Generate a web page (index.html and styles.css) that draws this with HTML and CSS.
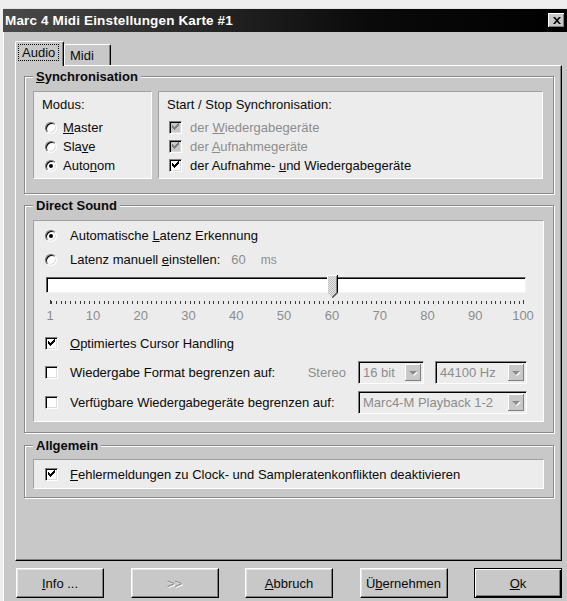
FILE: index.html
```html
<!DOCTYPE html>
<html lang="de">
<head>
<meta charset="utf-8">
<title>Marc 4 Midi Einstellungen Karte #1</title>
<link rel="stylesheet" href="styles.css">
</head>
<body>
<div class="window">
  <div class="titlebar">
    <span class="title">Marc 4 Midi Einstellungen Karte #1</span>
    <span class="close">
      <svg width="8" height="7" viewBox="0 0 8 7"><path d="M0 0h2l2 2.2L6 0h2L5 3.5 8 7H6L4 4.8 2 7H0l3-3.5z" fill="#000"/></svg>
    </span>
  </div>
  <div class="client">
    <div class="tabs">
      <div class="tab active"><span class="focus">Audio</span></div>
      <div class="tab">Midi</div>
    </div>
    <div class="panel">
      <div class="group sync">
        <div class="group-title"><u>S</u>ynchronisation</div>
        <div class="sync-body">
          <div class="box modus">
            <div class="caption">Modus:</div>
            <div class="opt"><span class="radio"></span><span><u>M</u>aster</span></div>
            <div class="opt"><span class="radio"></span><span>Sla<u>v</u>e</span></div>
            <div class="opt"><span class="radio on"></span><span>Auto<u>n</u>om</span></div>
          </div>
          <div class="box startstop">
            <div class="caption">Start / Stop Synchronisation:</div>
            <div class="opt dis"><span class="check on dis"></span><span>der <u>W</u>iedergabegeräte</span></div>
            <div class="opt dis"><span class="check on dis"></span><span>der <u>A</u>ufnahmegeräte</span></div>
            <div class="opt"><span class="check on"></span><span>der Aufnahme- <u>u</u>nd Wiedergabegeräte</span></div>
          </div>
        </div>
      </div>

      <div class="group ds">
        <div class="group-title">Direct Sound</div>
        <div class="box ds-body">
          <div class="opt row1"><span class="radio on"></span><span>Automatische <u>L</u>atenz Erkennung</span></div>
          <div class="opt row2"><span class="radio"></span><span>Latenz manuell <u>e</u>instellen:</span><span class="val">60</span><span class="unit">ms</span></div>
          <div class="track">
            <span class="thumb" style="left: calc(59.6% - 5px)">
              <svg width="11" height="23" viewBox="0 0 11 23">
                <defs>
                  <pattern id="dither" width="2" height="2" patternUnits="userSpaceOnUse">
                    <rect width="2" height="2" fill="#e6e6e6"/>
                    <rect width="1" height="1" fill="#bdbdbd"/>
                    <rect x="1" y="1" width="1" height="1" fill="#bdbdbd"/>
                  </pattern>
                </defs>
                <path d="M0.5 0.5h9.5v17l-5 5-4.5-4.5z" fill="url(#dither)"/>
                <path d="M0.5 18V0.5h9" fill="none" stroke="#fff"/>
                <path d="M9.5 1v16.5l-4.5 4.5" fill="none" stroke="#808080"/>
                <path d="M10.5 0v17.8l-5 5" fill="none" stroke="#000"/>
              </svg>
            </span>
          </div>
          <div class="ticks"></div>
          <div class="scale">
            <span style="left: 0%">1</span>
            <span style="left: 9.09%">10</span>
            <span style="left: 19.19%">20</span>
            <span style="left: 29.29%">30</span>
            <span style="left: 39.39%">40</span>
            <span style="left: 49.49%">50</span>
            <span style="left: 59.6%">60</span>
            <span style="left: 69.7%">70</span>
            <span style="left: 79.8%">80</span>
            <span style="left: 89.9%">90</span>
            <span style="left: 100%">100</span>
          </div>
          <div class="opt row3"><span class="check on"></span><span><u>O</u>ptimiertes Cursor Handling</span></div>
          <div class="opt row4">
            <span class="check"></span><span class="grow">Wiedergabe Format begrenzen auf:</span>
            <span class="stereo">Stereo</span>
            <span class="combo c16"><span class="ctext">16 bit</span><span class="drop"><i></i></span></span>
            <span class="combo c441"><span class="ctext">44100 Hz</span><span class="drop"><i></i></span></span>
          </div>
          <div class="opt row5">
            <span class="check"></span><span class="grow">Verfügbare Wiedergabegeräte begrenzen auf:</span>
            <span class="combo cdev"><span class="ctext">Marc4-M Playback 1-2</span><span class="drop"><i></i></span></span>
          </div>
        </div>
      </div>

      <div class="group gen">
        <div class="group-title">Allgemein</div>
        <div class="box gen-body">
          <div class="opt"><span class="check on"></span><span><u>F</u>ehlermeldungen zu Clock- und Sampleratenkonflikten deaktivieren</span></div>
        </div>
      </div>
    </div>

    <div class="buttons">
      <button class="btn"><u>I</u>nfo ...</button>
      <button class="btn disabled">&gt;&gt;</button>
      <button class="btn"><u>A</u>bbruch</button>
      <button class="btn">Ü<u>b</u>ernehmen</button>
      <button class="btn default"><u>O</u>k</button>
    </div>
  </div>
</div>
</body>
</html>
```
FILE: styles.css
```css
* {
  box-sizing: border-box;
}

html,
body {
  margin: 0;
  padding: 0;
}

body {
  width: 567px;
  height: 601px;
  overflow: hidden;
  background: #eeeeee;
  font-family: "Liberation Sans", Arial, sans-serif;
  font-size: 13px;
  color: #0a0a0a;
}

u {
  text-decoration: underline;
  text-underline-offset: 1px;
}

/* window frame */
.window {
  margin: 8px 0 0 3px;
  height: 593px;
  background: #c8c8c8;
  border-top: 1px solid #e2e2e2;
  box-shadow: inset 1px 0 #ffffff;
}

.titlebar {
  height: 23px;
  display: flex;
  align-items: center;
  justify-content: space-between;
  padding: 0 2px 0 2px;
  background: linear-gradient(90deg, #4a4a4a 0%, #262626 35%, #0a0a0a 65%, #000 100%);
}

.title {
  color: #ffffff;
  font-weight: bold;
  font-size: 13.5px;
  letter-spacing: 0.15px;
}

.close {
  width: 17px;
  height: 15px;
  display: flex;
  align-items: center;
  justify-content: center;
  background: #c8c8c8;
  box-shadow: inset -1px -1px #000, inset 1px 1px #fff, inset -2px -2px #808080;
}

/* client area */
.client {
  padding: 9px 5px 0 12px;
}

.tabs {
  height: 24px;
  display: flex;
  align-items: flex-end;
}

.tab {
  height: 21px;
  padding: 3px 0 0 5px;
  width: 47px;
  background: #c8c8c8;
  border-top: 1px solid #fff;
  border-left: 1px solid #fff;
  border-right: 1px solid #000;
  border-radius: 2px 2px 0 0;
  box-shadow: inset -1px 0 #808080;
}

.tab.active {
  position: relative;
  z-index: 1;
  width: 49px;
  height: 25px;
  margin-bottom: -1px;
  padding: 3px 0 0 3px;
}

.focus {
  display: inline-block;
  padding: 0 3px;
  line-height: 15px;
  outline: 1px dotted #000;
}

.panel {
  width: 547px;
  height: 496px;
  background: #c8c8c8;
  border-top: 1px solid #fff;
  border-left: 1px solid #fff;
  border-right: 1px solid #000;
  border-bottom: 1px solid #000;
  box-shadow: inset -1px -1px #808080;
  padding: 10px 7px 0 8px;
}

/* etched group boxes */
.group {
  display: flex;
  flex-direction: column;
  align-items: flex-start;
  border: 1px solid #8a8a8a;
  box-shadow: inset 1px 1px #fff, 1px 1px #fff;
  padding: 0 9px 0 8px;
}

.group-title {
  margin: -8px 0 0 0;
  padding: 0 3px;
  line-height: 15px;
  font-weight: bold;
  background: #c8c8c8;
}

.box {
  background: #ececec;
  border: 1px solid;
  border-color: #a0a0a0 #ffffff #ffffff #a0a0a0;
}

/* Synchronisation */
.sync {
  padding-bottom: 14px;
}

.sync-body {
  margin-top: 7px;
  display: flex;
  gap: 6px;
}

.modus {
  width: 119px;
  height: 88px;
  padding: 5px 0 0 8px;
}

.startstop {
  width: 385px;
  height: 88px;
  padding: 5px 0 0 8px;
}

.caption {
  line-height: 15px;
  margin-bottom: 6px;
}

.opt {
  display: flex;
  align-items: center;
  height: 19px;
  white-space: nowrap;
}

.opt.dis {
  color: #8c8c8c;
}

.modus .opt {
  padding-left: 3px;
}

.modus .radio {
  margin-right: 6px;
}

.startstop .opt {
  padding-left: 2px;
}

.startstop .check {
  margin-right: 8px;
}

/* radio buttons */
.radio {
  position: relative;
  flex: none;
  width: 12px;
  height: 12px;
  border-radius: 50%;
  border: 1px solid;
  border-color: #707070 #ffffff #ffffff #707070;
  background: #fff;
  box-shadow: inset 1px 1px #000, inset -1px -1px #dcdcdc;
}

.radio.on::after {
  content: "";
  position: absolute;
  left: 3px;
  top: 3px;
  width: 4px;
  height: 4px;
  border-radius: 50%;
  background: #000;
}

/* check boxes */
.check {
  position: relative;
  flex: none;
  width: 13px;
  height: 13px;
  border: 1px solid;
  border-color: #808080 #ffffff #ffffff #808080;
  background: #fff;
  box-shadow: inset 1px 1px #000, inset -1px -1px #dcdcdc;
}

.check.dis {
  background: #c8c8c8;
}

.check.on::after {
  content: "";
  position: absolute;
  left: 2px;
  top: 1px;
  width: 7px;
  height: 7px;
  background: no-repeat center / 7px 7px url("data:image/svg+xml;utf8,<svg xmlns='http://www.w3.org/2000/svg' width='7' height='7' viewBox='0 0 7 7'><path d='M0 2h1v1h1v1h1V3h1V2h1V1h1V0h1v3H6v1H5v1H4v1H3v1H2V6H1V5H0z' fill='%23000'/></svg>");
}

.check.on.dis::after {
  background-image: url("data:image/svg+xml;utf8,<svg xmlns='http://www.w3.org/2000/svg' width='7' height='7' viewBox='0 0 7 7'><path d='M0 2h1v1h1v1h1V3h1V2h1V1h1V0h1v3H6v1H5v1H4v1H3v1H2V6H1V5H0z' fill='%23808080'/></svg>");
}

/* Direct Sound */
.ds {
  margin-top: 11px;
  padding-bottom: 10px;
}

.ds-body {
  margin-top: 7px;
  width: 511px;
  height: 202px;
  padding: 5px 16px 0 11px;
}

.ds-body .radio {
  margin-right: 13px;
}

.ds-body .check {
  margin-right: 12px;
}

.row2 {
  margin-top: 5px;
}

.val {
  margin-left: 11px;
  color: #8c8c8c;
}

.unit {
  margin-left: 15px;
  color: #8c8c8c;
  font-size: 12px;
}

.track {
  position: relative;
  margin: 8px 0 0 1px;
  width: 480px;
  height: 16px;
  background: #fff;
  border: 1px solid;
  border-color: #606060 #f4f4f4 #f4f4f4 #606060;
  box-shadow: inset 1px 1px #000;
}

.thumb {
  position: absolute;
  top: -3px;
  width: 11px;
  height: 23px;
}

.thumb svg {
  display: block;
}

.ticks {
  margin: 7px 0 0 5px;
  width: 474px;
  height: 4px;
  background: repeating-linear-gradient(90deg, #3a3a3a 0 1px, transparent 1px 4.7778px) 0 1px / 100% 3px no-repeat;
  border-left: 1px solid #3a3a3a;
  border-right: 1px solid #3a3a3a;
}

.scale {
  position: relative;
  margin-left: 5px;
  width: 473px;
  height: 16px;
  margin-top: 4px;
  color: #8c8c8c;
}

.scale span {
  position: absolute;
  top: 0;
  line-height: 15px;
  transform: translateX(-50%);
}

.row3 {
  margin-top: 10px;
}

.row4 {
  margin-top: 8px;
  height: 23px;
}

.row5 {
  margin-top: 7px;
  height: 23px;
}

.grow {
  flex: 1;
}

.stereo {
  color: #8c8c8c;
  margin-right: 12px;
}

.combo {
  display: flex;
  height: 23px;
  border: 1px solid;
  border-color: #808080 #ffffff #ffffff #808080;
  box-shadow: inset 1px 1px #000;
  background: #ececec;
  padding: 2px;
  color: #8c8c8c;
}

.ctext {
  flex: 1;
  padding-left: 2px;
  line-height: 17px;
}

.c16 {
  width: 66px;
  margin-right: 11px;
}

.c441 {
  width: 92px;
}

.cdev {
  width: 169px;
}

.drop {
  flex: none;
  width: 16px;
  height: 17px;
  display: flex;
  align-items: center;
  justify-content: center;
  background: #c8c8c8;
  box-shadow: inset -1px -1px #808080, inset 1px 1px #fff;
}

.drop i {
  width: 0;
  height: 0;
  border-left: 4px solid transparent;
  border-right: 4px solid transparent;
  border-top: 4px solid #8a8a8a;
  filter: drop-shadow(1px 1px 0 #fff);
}

/* Allgemein */
.gen {
  margin-top: 12px;
  padding-bottom: 8px;
}

.gen-body {
  margin-top: 6px;
  width: 511px;
  height: 30px;
  padding: 5px 0 0 11px;
}

.gen-body .check {
  margin-right: 12px;
}

/* bottom buttons */
.buttons {
  margin: 7px 0 0 1px;
  width: 546px;
  display: flex;
  justify-content: space-between;
}

.btn {
  width: 88px;
  height: 30px;
  padding: 0;
  font: inherit;
  color: #0a0a0a;
  background: #c8c8c8;
  border: 1px solid;
  border-color: #fff #000 #000 #fff;
  box-shadow: inset -1px -1px #808080, inset 1px 1px #e4e4e4;
}

.btn.disabled {
  color: #8c8c8c;
  text-shadow: 1px 1px #fff;
}

.btn.default {
  border: 1px solid #000;
  box-shadow: inset 1px 1px #fff, inset -1px -1px #000, inset -2px -2px #808080;
}
```
